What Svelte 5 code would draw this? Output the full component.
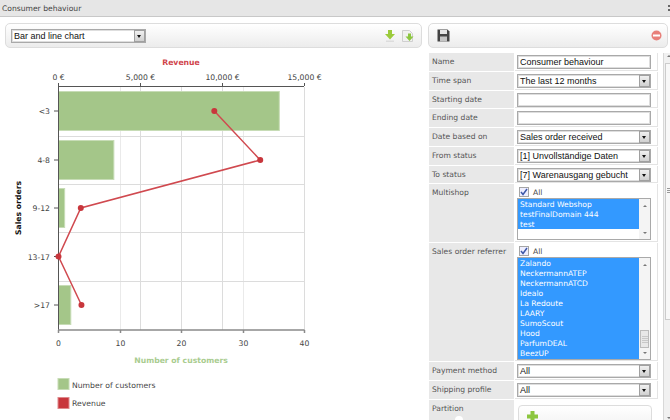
<script>
  const rows = [
    { label: "Name", input: "Consumer behaviour" },
    { label: "Time span", select: "The last 12 months" },
    { label: "Starting date", input: "" },
    { label: "Ending date", input: "" },
    { label: "Date based on", select: "Sales order received" },
    { label: "From status", select: "[1] Unvollständige Daten" },
    { label: "To status", select: "[7] Warenausgang gebucht" },
    { label: "Multishop", list: ["Standard Webshop", "testFinalDomain 444", "test"], size: "small" },
    {
      label: "Sales order referrer",
      list: ["Zalando", "NeckermannATEP", "NeckermannATCD", "Idealo", "La Redoute", "LAARY", "SumoScout", "Hood", "ParfumDEAL", "BeezUP"],
      size: "large"
    },
    { label: "Payment method", select: "All" },
    { label: "Shipping profile", select: "All" }
  ];

  const groups = [
    { name: "<3", y: 111, bar: 35.9, rev: 9500 },
    { name: "4-8", y: 160, bar: 9, rev: 12300 },
    { name: "9-12", y: 208, bar: 1, rev: 1360 },
    { name: "13-17", y: 256.5, bar: 0, rev: 0 },
    { name: ">17", y: 305, bar: 2, rev: 1400 }
  ];

  const x0 = 58.5;
  const xw = 246;
  const barX = (v) => x0 + (v / 40) * xw;
  const revX = (v) => x0 + (v / 15000) * xw;
  const points = groups.map((g) => `${revX(g.rev)},${g.y}`).join(" ");
</script>

<div class="page">
  <header class="title">
    <span>Consumer behaviour</span>
    <span class="grip"></span>
  </header>

  <div class="columns">
    <section class="left">
      <div class="toolbar">
        <div class="select chart-type">
          <span>Bar and line chart</span>
          <i class="arrow"></i>
        </div>
        <div class="tools">
          <svg width="10" height="12" viewBox="0 0 10 12">
            <path d="M3 0h4v4h3L5 9.500 0 4h3z" fill="#9ccb3c" />
            <rect x="1" y="10.500" width="8" height="1.500" fill="#dcdcdc" />
          </svg>
          <svg width="12" height="12" viewBox="0 0 12 12">
            <path d="M0.500 0.500h7l3 3v8h-10z" fill="#f1f1f1" stroke="#cfcfcf" />
            <path d="M6 3.500h3v3h2.500L7.500 11 3.500 6.500H6z" fill="#8cc63f" />
          </svg>
        </div>
      </div>

      <svg class="chart" width="422" height="372" viewBox="0 48 422 372">
        <text class="axis-title revenue" x="181" y="65">Revenue</text>

        {#each [120.5, 243.5] as x}
          <line x1={x} x2={x} y1="87" y2="330" class="grid light" />
        {/each}
        {#each [140.5, 181.5, 222.5, 304.5] as x}
          <line x1={x} x2={x} y1="87" y2="330" class="grid" />
        {/each}
        {#each [136.5, 184.5, 232.5, 281.5] as y}
          <line x1="58" x2="304" y1={y} y2={y} class="grid" />
        {/each}

        {#each groups as g}
          <rect x={x0} y={g.y - 19.5} width={barX(g.bar) - x0} height="39" class="bar" />
          <line x1="54" x2="58" y1={g.y} y2={g.y} class="axis" />
          <text class="tick" x="50" y={g.y + 3} text-anchor="end">{g.name}</text>
        {/each}

        <line x1="58.5" x2="58.5" y1="86" y2="330" class="axis" />
        <line x1="58" x2="304" y1="86.5" y2="86.5" class="axis" />
        <line x1="58" x2="304.5" y1="330" y2="330" class="axis bottom" />

        {#each [["0 €", 58.5], ["5,000 €", 140.5], ["10,000 €", 222.5], ["15,000 €", 304.5]] as [label, x]}
          <line x1={x} x2={x} y1="83" y2="86" class="axis" />
          <text class="tick" x={x} y="80" text-anchor="middle">{label}</text>
        {/each}
        {#each [["0", 58.5], ["10", 120.5], ["20", 181.5], ["30", 243.5], ["40", 304.5]] as [label, x]}
          <line x1={x} x2={x} y1="330" y2="333" class="axis bottom" />
          <text class="tick" x={x} y="346" text-anchor="middle">{label}</text>
        {/each}

        <polyline {points} class="line" />
        {#each groups as g}
          <circle cx={revX(g.rev)} cy={g.y} r="3" fill="#c8363c" />
        {/each}

        <text class="axis-title customers" x="181" y="363">Number of customers</text>
        <text class="axis-title orders" transform="translate(21 208) rotate(-90)">Sales orders</text>

        <rect x="58" y="378.500" width="11" height="11" class="swatch green" />
        <text class="tick" x="72" y="387.500">Number of customers</text>
        <rect x="58" y="397.500" width="11" height="11" class="swatch red" />
        <text class="tick" x="72" y="406">Revenue</text>
      </svg>
    </section>

    <section class="right">
      <div class="toolbar">
        <svg width="13" height="13" viewBox="0 0 13 13">
          <path d="M0.500 0.500h10L12.500 2.500V12.500H0.500z" fill="#444" />
          <rect x="3" y="1" width="7" height="4" fill="#e4e4e4" />
          <rect x="3" y="7.500" width="7" height="5" fill="#c4c4c4" />
        </svg>
        <svg width="11" height="11" viewBox="0 0 11 11">
          <circle cx="5.500" cy="5.500" r="5" fill="#e8807a" />
          <rect x="2" y="4.500" width="7" height="2" fill="#fff" />
        </svg>
      </div>

      <div class="pane">
        <div class="form">
          {#each rows as row}
            <div class="label">{row.label}</div>
            <div class="value {row.size ?? ''}">
              {#if row.select}
                <div class="select">
                  <span>{row.select}</span>
                  <i class="arrow"></i>
                </div>
              {:else if row.list}
                <div class="check">
                  <span class="box">
                    <svg width="8" height="8" viewBox="0 0 8 8"><path d="M1 4l2 2.500 4-5.500" fill="none" stroke="#3c57a8" stroke-width="1.500" /></svg>
                  </span>
                  <span>All</span>
                </div>
                <div class="list {row.size}">
                  <div class="options">
                    {#each row.list as item}
                      <div class="option">{item}</div>
                    {/each}
                  </div>
                  <div class="list-scroll">
                    <span class="up"></span>
                    {#if row.size === "large"}<span class="thumb"></span>{/if}
                    <span class="down"></span>
                  </div>
                </div>
              {:else}
                <input class="text" type="text" value={row.input} />
              {/if}
            </div>
          {/each}
          <div class="label partition-label">
            Partition
            <span class="knob"></span>
          </div>
          <div class="value partition">
            <div class="add">
              <svg width="11" height="11" viewBox="0 0 11 11">
                <path d="M3.500 0h4v3.500h3.500v4H7.500v3.500h-4V7.500H0v-4h3.500z" fill="#8cc63f" />
              </svg>
            </div>
          </div>
        </div>
        <div class="page-scroll">
          <span class="up"></span>
          <span class="page-thumb"><span class="grips"></span></span>
          <span class="down"></span>
        </div>
      </div>
    </section>
  </div>
</div>

<style>
  :global(body) {
    margin: 0;
    background: #fff;
    overflow: hidden;
  }
  .page {
    width: 670px;
    height: 420px;
    overflow: hidden;
    font-family: "DejaVu Sans", Verdana, sans-serif;
    font-size: 7.6px;
    color: #444;
  }
  .title {
    height: 16px;
    background: #e6e6e6;
    border-bottom: 1px solid #c8c8c8;
    padding-left: 2px;
    display: flex;
    justify-content: space-between;
    align-items: center;
  }
  .grip {
    width: 2px;
    height: 2px;
    border-top: 2px solid #666;
    border-bottom: 2px solid #666;
  }
  .columns {
    display: flex;
    padding-top: 6px;
  }
  .left {
    width: 423px;
    margin-left: 5px;
  }
  .right {
    width: 242px;
  }
  .toolbar {
    box-sizing: border-box;
    height: 25px;
    border: 1px solid #ddd;
    border-radius: 5px;
    background: linear-gradient(#fff, #ececec);
    display: flex;
    align-items: center;
    justify-content: space-between;
  }
  .left .toolbar {
    width: 417px;
    padding: 0 7px 0 5px;
  }
  .right .toolbar {
    width: 240px;
    padding: 0 5px 0 8px;
  }
  .tools {
    display: flex;
    align-items: center;
    gap: 7px;
  }
  .chart {
    display: block;
    margin-left: -5px;
  }
  .chart text {
    font-family: "DejaVu Sans", Verdana, sans-serif;
    font-size: 7.7px;
  }
  .tick {
    fill: #444;
  }
  .axis-title {
    font-weight: bold;
    text-anchor: middle;
  }
  .revenue {
    fill: #d0434a;
  }
  .customers {
    fill: #a9cc8f;
  }
  .orders {
    fill: #111;
  }
  .grid {
    stroke: #dcdcdc;
    stroke-width: 1;
  }
  .grid.light {
    stroke: #eaeaea;
  }
  .bar {
    fill: #a4c689;
    stroke: #c7dcb6;
    stroke-width: 1;
  }
  .swatch {
    stroke-width: 1;
  }
  .swatch.green {
    fill: #a4c689;
    stroke: #c7dcb6;
  }
  .swatch.red {
    fill: #c8363c;
    stroke: #df8a8d;
  }
  .axis {
    stroke: #555;
    stroke-width: 1;
  }
  .axis.bottom {
    stroke: #8a8a8a;
    stroke-width: 1.5;
  }
  .line {
    fill: none;
    stroke: #d0494f;
    stroke-width: 1.5;
  }
  .pane {
    display: flex;
    margin-top: 5px;
  }
  .form {
    width: 229px;
    margin-left: 1px;
    display: grid;
    grid-template-columns: 85px 143px;
    gap: 1px;
    align-content: start;
  }
  .label {
    background: #e8e8e8;
    padding: 4px 3px 0;
    color: #555;
    white-space: nowrap;
    box-sizing: border-box;
  }
  .value {
    height: 17.75px;
    border-bottom: 1px solid #e4e4e4;
    border-right: 1px solid #e4e4e4;
    padding: 2px 6px 0 2px;
    box-sizing: border-box;
  }
  .value.small {
    height: 58px;
  }
  .value.large {
    height: 118px;
  }
  .text,
  .select {
    font-family: "Liberation Sans", Arial, sans-serif;
    font-size: 9px;
    color: #111;
    box-sizing: border-box;
    height: 14px;
    width: 134px;
    background: #fff;
    border: 1px solid #a9a9a9;
    box-shadow: inset 0 0 0 1px #dedede;
    padding: 0 2px;
    margin: 0;
    outline: none;
  }
  .select {
    display: flex;
    align-items: center;
    justify-content: space-between;
    padding-right: 0;
  }
  .left .select {
    width: 135px;
  }
  .arrow {
    width: 11px;
    height: 12px;
    box-sizing: border-box;
    background: linear-gradient(#f0f0f0, #d0d0d0);
    border: 1px solid #a0a0a0;
    position: relative;
    flex: none;
  }
  .arrow::after {
    content: "";
    position: absolute;
    left: 2px;
    top: 4px;
    border: 2.5px solid transparent;
    border-top: 3px solid #111;
    border-bottom: 0;
  }
  .check {
    display: flex;
    align-items: center;
    gap: 4px;
    height: 12px;
    padding-left: 2px;
  }
  .box {
    width: 8px;
    height: 8px;
    border: 1px solid #a5a5a5;
    background: #eef;
    display: flex;
  }
  .list {
    width: 134px;
    border: 1px solid #a9a9a9;
    display: flex;
    box-sizing: border-box;
    background: #fff;
    overflow: hidden;
  }
  .list.small {
    height: 42px;
  }
  .list.large {
    height: 103px;
  }
  .options {
    width: 121px;
    color: #fff;
    background: #3399ff;
    align-self: flex-start;
  }
  .list.large .options {
    align-self: stretch;
  }
  .option {
    height: 10px;
    line-height: 11px;
    padding-left: 2px;
    white-space: nowrap;
  }
  .list-scroll {
    flex: 1;
    background: #f4f4f4;
    position: relative;
  }
  .up,
  .down {
    position: absolute;
    left: 50%;
    margin-left: -2px;
    border: 2px solid transparent;
  }
  .up {
    top: 6px;
    border-bottom: 2px solid #777;
    border-top: 0;
  }
  .down {
    bottom: 5px;
    border-top: 2px solid #777;
    border-bottom: 0;
  }
  .thumb {
    position: absolute;
    left: 1px;
    right: 1px;
    bottom: 11px;
    height: 18px;
    background: repeating-linear-gradient(#e8e8e8 0 1px, #c8c8c8 1px 2px);
    background-size: 6px 8px;
    background-position: center;
    background-repeat: no-repeat;
    background-color: #e8e8e8;
    border: 1px solid #bbb;
    box-sizing: border-box;
  }
  .partition-label {
    height: 40px;
  }
  .knob {
    display: block;
    width: 8px;
    height: 8px;
    margin: 3px 0 0 23px;
    border-radius: 50%;
    background: #fff;
  }
  .value.partition {
    height: 40px;
    padding: 5px 0 0 3px;
    border: 0;
  }
  .add {
    width: 134px;
    height: 30px;
    box-sizing: border-box;
    border: 1px solid #ddd;
    border-radius: 4px;
    background: linear-gradient(#fff, #eee);
    padding: 5px 8px;
  }
  .page-scroll {
    box-sizing: border-box;
    width: 7px;
    height: 367px;
    margin-left: 5px;
    position: relative;
    overflow: hidden;
    background: #f1f1f1;
    border-left: 1px solid #d8d8d8;
  }
  .page-scroll .up {
    top: 2px;
    left: 3px;
    margin: 0;
  }
  .page-scroll .down {
    bottom: 1px;
    left: 3px;
    margin: 0;
  }
  .page-thumb {
    position: absolute;
    left: 1px;
    top: 10px;
    width: 12px;
    height: 257px;
    background: #f8f8f8;
    border: 1px solid #ccc;
    box-sizing: border-box;
  }
  .grips {
    position: absolute;
    left: 1px;
    top: 124px;
    width: 4px;
    height: 6px;
    background: repeating-linear-gradient(#999 0 1px, #f8f8f8 1px 2px);
  }
</style>
